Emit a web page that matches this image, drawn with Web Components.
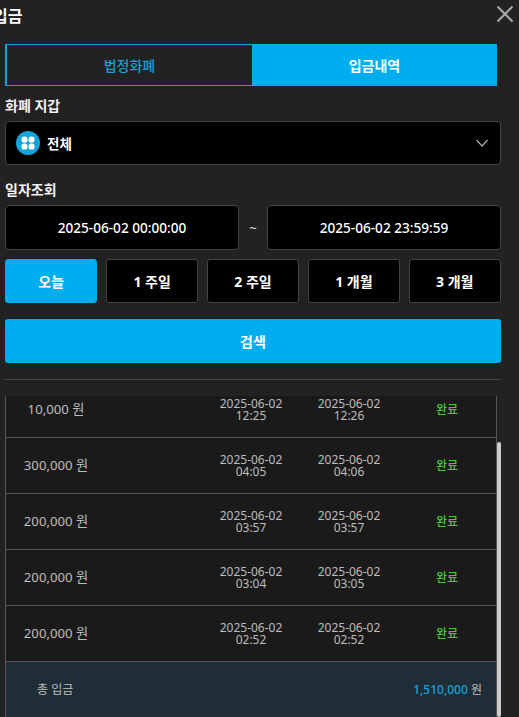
<!DOCTYPE html>
<html lang="ko">
<head>
<meta charset="utf-8">
<title>입금</title>
<style>
  html, body { margin: 0; height: 717px; overflow: hidden; background: #222; }
  body { font-family: "Noto Sans", "Noto Sans CJK KR", sans-serif; color: #fff; }
</style>
</head>
<body>
<deposit-modal>
  <span slot="title">입금</span>
  <tab-bar></tab-bar>
  <field-label style="margin-top:9px">화폐 지갑</field-label>
  <wallet-select>전체</wallet-select>
  <field-label style="margin-top:14px">일자조회</field-label>
  <date-range from="2025-06-02 00:00:00" to="2025-06-02 23:59:59"></date-range>
  <period-buttons>
    <period-btn active>오늘</period-btn>
    <period-btn>1 주일</period-btn>
    <period-btn>2 주일</period-btn>
    <period-btn>1 개월</period-btn>
    <period-btn>3 개월</period-btn>
  </period-buttons>
  <search-btn>검색</search-btn>
  <history-table>
    <history-row amount="10,000" start="12:25" end="12:26"></history-row>
    <history-row amount="300,000" start="04:05" end="04:06"></history-row>
    <history-row amount="200,000" start="03:57" end="03:57"></history-row>
    <history-row amount="200,000" start="03:04" end="03:05"></history-row>
    <history-row amount="200,000" start="02:52" end="02:52"></history-row>
    <history-total total="1,510,000"></history-total>
  </history-table>
</deposit-modal>

<script>
class DepositModal extends HTMLElement {
  constructor() {
    super();
    this.attachShadow({ mode: "open" });
  }

  connectedCallback() {
    this.shadowRoot.innerHTML = `
      <style>
        :host { display: block; box-sizing: border-box; width: 519px; height: 717px; padding: 0 18px 0 5px; overflow: hidden; }
        header { display: flex; justify-content: space-between; height: 44px; margin-right: -18px; }
        h1 { margin: 6px 0 0 -12px; font-size: 16px; line-height: 20px; font-weight: 700; }
        svg { width: 18px; height: 18px; margin: 5px 5px 0 0; }
      </style>
      <header>
        <h1><slot name="title"></slot></h1>
        <svg viewBox="0 0 18 18" fill="none" stroke="#a9a9a9" stroke-width="2"><path d="M1.5 1.5 16.5 16.5M16.5 1.5 1.5 16.5"/></svg>
      </header>
      <slot></slot>
    `;
  }
}

class TabBar extends HTMLElement {
  constructor() {
    super();
    this.attachShadow({ mode: "open" });
  }

  connectedCallback() {
    this.shadowRoot.innerHTML = `
      <style>
        :host { display: flex; width: 492px; height: 42px; font-size: 14px; font-weight: 500; }
        div { flex: 1; display: flex; align-items: center; justify-content: center; box-sizing: border-box; padding-bottom: 1px; }
        .off { color: #1b9fd2; border: 1px solid #1f9ed1; border-left-width: 2px; border-right: 0; }
        .on { background: #00aeef; color: #fff; font-weight: 700; }
      </style>
      <div class="off">법정화폐</div>
      <div class="on">입금내역</div>
    `;
  }
}

class FieldLabel extends HTMLElement {
  constructor() {
    super();
    this.attachShadow({ mode: "open" });
  }

  connectedCallback() {
    this.shadowRoot.innerHTML = `
      <style>
        :host { display: block; height: 26px; font-size: 14px; line-height: 22px; font-weight: 700; color: #f2f2f2; }
      </style>
      <slot></slot>
    `;
  }
}

class WalletSelect extends HTMLElement {
  constructor() {
    super();
    this.attachShadow({ mode: "open" });
  }

  connectedCallback() {
    this.shadowRoot.innerHTML = `
      <style>
        :host { display: flex; align-items: center; gap: 7px; box-sizing: border-box; width: 496px; height: 44px; padding: 0 12px 0 10px; background: #000; border: 1px solid #444; border-radius: 4px; font-size: 13.5px; font-weight: 700; }
        .grow { flex: 1; }
      </style>
      <svg width="24" height="24" viewBox="0 0 24 24">
        <circle cx="12" cy="12" r="12" fill="#12a5dc"/>
        <g fill="#fff"><rect x="5.5" y="5.5" width="6" height="6" rx="2.6"/><rect x="12.5" y="5.5" width="6" height="6" rx="2.6"/><rect x="5.5" y="12.5" width="6" height="6" rx="2.6"/><rect x="12.5" y="12.5" width="6" height="6" rx="2.6"/></g>
      </svg>
      <span class="grow"><slot></slot></span>
      <svg width="12" height="8" viewBox="0 0 12 8" fill="none" stroke="#aaa" stroke-width="1.2"><path d="M.5 1 6 7l5.5-6"/></svg>
    `;
  }
}

class DateRange extends HTMLElement {
  constructor() {
    super();
    this.attachShadow({ mode: "open" });
  }

  connectedCallback() {
    this.shadowRoot.innerHTML = `
      <style>
        :host { display: flex; align-items: center; width: 496px; height: 45px; font-size: 13.6px; font-weight: 500; }
        div { box-sizing: border-box; width: 234px; height: 45px; display: flex; align-items: center; justify-content: center; background: #000; border: 1px solid #444; border-radius: 4px; }
        span { flex: 1; text-align: center; color: #ddd; font-size: 13px; }
      </style>
      <div>${this.getAttribute("from")}</div>
      <span>~</span>
      <div>${this.getAttribute("to")}</div>
    `;
  }
}

class PeriodButtons extends HTMLElement {
  constructor() {
    super();
    this.attachShadow({ mode: "open" });
  }

  connectedCallback() {
    this.shadowRoot.innerHTML = `
      <style>
        :host { display: grid; grid-template-columns: repeat(5, 1fr); gap: 8.5px; width: 496px; height: 44px; margin-top: 9px; }
      </style>
      <slot></slot>
    `;
  }
}

class PeriodBtn extends HTMLElement {
  constructor() {
    super();
    this.attachShadow({ mode: "open" });
  }

  connectedCallback() {
    this.shadowRoot.innerHTML = `
      <style>
        :host { display: flex; align-items: center; justify-content: center; box-sizing: border-box; background: #000; border: 1px solid #444; border-radius: 3px; font-size: 14px; font-weight: 700; }
        :host([active]) { background: #00aeef; border-color: #00aeef; }
      </style>
      <slot></slot>
    `;
  }
}

class SearchBtn extends HTMLElement {
  constructor() {
    super();
    this.attachShadow({ mode: "open" });
  }

  connectedCallback() {
    this.shadowRoot.innerHTML = `
      <style>
        :host { display: flex; align-items: center; justify-content: center; width: 496px; height: 44px; margin-top: 16px; background: #00aeef; border-radius: 3px; font-size: 14px; font-weight: 700; }
      </style>
      <slot></slot>
    `;
  }
}

class HistoryTable extends HTMLElement {
  constructor() {
    super();
    this.attachShadow({ mode: "open" });
  }

  connectedCallback() {
    this.shadowRoot.innerHTML = `
      <style>
        :host { display: block; width: 496px; margin-top: 16px; border-top: 1px solid #444; }
        .view { display: flex; height: 321px; margin-top: 16px; overflow: hidden; }
        .rows { box-sizing: border-box; width: 492px; height: 336px; margin-top: -14px; flex: none; border: solid #555; border-width: 0 1px; }
        .thumb { width: 4px; height: 275px; margin-top: 46px; flex: none; background: #ccc; border-radius: 2px; }
      </style>
      <div class="view">
        <div class="rows"><slot></slot></div>
        <div class="thumb"></div>
      </div>
    `;
  }
}

class HistoryRow extends HTMLElement {
  constructor() {
    super();
    this.attachShadow({ mode: "open" });
  }

  connectedCallback() {
    const day = "2025-06-02";
    this.shadowRoot.innerHTML = `
      <style>
        :host { display: grid; grid-template-columns: 100px 1fr 98px 98px 98px; align-items: center; box-sizing: border-box; height: 56px; background: #1a1a1a; border-bottom: 1px solid #555; color: #bdbdbd; font-size: 12px; text-align: center; }
        .date { line-height: 12px; }
        .amount { font-size: 13.2px; padding-bottom: 2px; }
        .done { color: #3fcf2f; font-weight: 500; padding-bottom: 2px; }
      </style>
      <div class="amount">${this.getAttribute("amount")} 원</div>
      <div></div>
      <div class="date">${day}<br>${this.getAttribute("start")}</div>
      <div class="date">${day}<br>${this.getAttribute("end")}</div>
      <div class="done">완료</div>
    `;
  }
}

class HistoryTotal extends HTMLElement {
  constructor() {
    super();
    this.attachShadow({ mode: "open" });
  }

  connectedCallback() {
    this.shadowRoot.innerHTML = `
      <style>
        :host { display: flex; justify-content: space-between; align-items: center; box-sizing: border-box; height: 56px; padding: 0 14px 2px 31px; background: #1f2e36; color: #bdbdbd; font-size: 12px; }
        b { font-weight: 500; color: #1b9fd9; }
      </style>
      <span>총 입금</span>
      <span><b>${this.getAttribute("total")}</b> 원</span>
    `;
  }
}

customElements.define("deposit-modal", DepositModal);
customElements.define("tab-bar", TabBar);
customElements.define("field-label", FieldLabel);
customElements.define("wallet-select", WalletSelect);
customElements.define("date-range", DateRange);
customElements.define("period-buttons", PeriodButtons);
customElements.define("period-btn", PeriodBtn);
customElements.define("search-btn", SearchBtn);
customElements.define("history-table", HistoryTable);
customElements.define("history-row", HistoryRow);
customElements.define("history-total", HistoryTotal);
</script>
</body>
</html>
